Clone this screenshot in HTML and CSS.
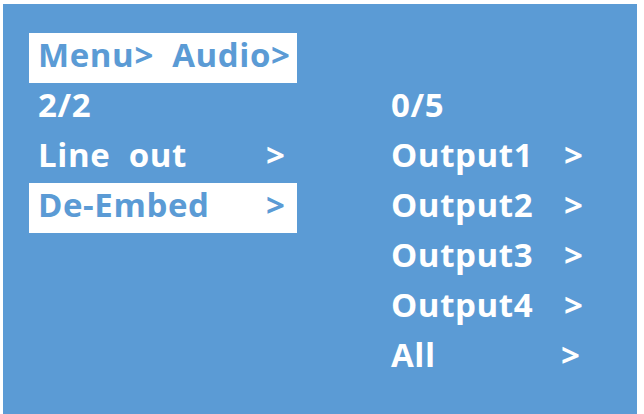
FILE: index.html
```html
<!DOCTYPE html>
<html lang="en">
<head>
  <meta charset="UTF-8"/>
  <title>Menu • Audio</title>
  <link rel="stylesheet" href="styles.css">
</head>
<body>
  <main class="screen">
    <ul class="menu menu-left">
      <li class="item selected"><span class="crumb">Menu&gt;  Audio&gt;</span></li>
      <li class="item"><span class="label">2/2</span></li>
      <li class="item"><span class="label">Line  out</span><span class="arrow">&gt;</span></li>
      <li class="item selected"><span class="label">De-Embed</span><span class="arrow">&gt;</span></li>
    </ul>

    <ul class="menu menu-right">
      <li class="item"><span class="label">0/5</span></li>
      <li class="item"><span class="label">Output1</span><span class="arrow">&gt;</span></li>
      <li class="item"><span class="label">Output2</span><span class="arrow">&gt;</span></li>
      <li class="item"><span class="label">Output3</span><span class="arrow">&gt;</span></li>
      <li class="item"><span class="label">Output4</span><span class="arrow">&gt;</span></li>
      <li class="item item-all"><span class="label">All</span><span class="arrow">&gt;</span></li>
    </ul>
  </main>
</body>
</html>
```

FILE: styles.css
```css
:root {
  --lcd-blue: #5b9bd5;
  --lcd-white: #ffffff;
}
* { box-sizing:border-box; margin:0; padding:0; }
body {
  background:var(--lcd-white);
  font-family:"Open Sans", "Liberation Sans", sans-serif;
  font-weight:700;
}

/* —— Screen —— */
.screen {
  margin:4px 7px 0 3px; height:410px;
  background:var(--lcd-blue); color:var(--lcd-white);
  padding:29px 0 0 26px;
  display:grid; grid-template-columns:268px auto; column-gap:94px;
  align-items:start;
}

/* —— Menus —— */
.menu { list-style:none; }
.menu-right { padding-top:50px; }
.item {
  display:flex; height:50px; line-height:44px;
  font-size:33px; letter-spacing:0.6px; white-space:pre;
}
.menu-left .item { padding-left:9px; }
.item.selected {
  background:var(--lcd-white); color:var(--lcd-blue);
}
.menu-left .label { width:228px; }
.menu-right .label { width:173px; }
.menu-right .item-all .label { width:170px; }
```
